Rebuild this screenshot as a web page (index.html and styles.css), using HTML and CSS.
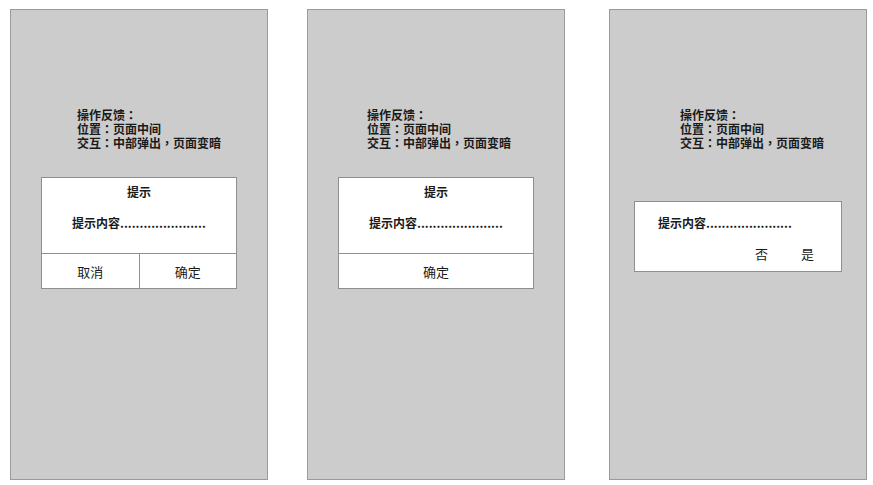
FILE: index.html
```html
<!DOCTYPE html>
<html lang="zh">
<head>
    <meta charset="UTF-8">
    <title>操作反馈 - 提示框</title>
    <link rel="stylesheet" href="styles.css">
</head>
<body>
    <div class="screens">
        <!-- 两个按钮 -->
        <div class="phone phone-a">
            <div class="note" lang="zh-TW">
                <div>操作反馈：</div>
                <div>位置：页面中间</div>
                <div>交互：中部弹出，页面变暗</div>
            </div>
            <div class="dialog">
                <div class="dialog-title">提示</div>
                <div class="dialog-text">提示内容......................</div>
                <div class="dialog-buttons">
                    <div class="btn">取消</div>
                    <div class="btn">确定</div>
                </div>
            </div>
        </div>

        <!-- 一个按钮 -->
        <div class="phone phone-b">
            <div class="note" lang="zh-TW">
                <div>操作反馈：</div>
                <div>位置：页面中间</div>
                <div>交互：中部弹出，页面变暗</div>
            </div>
            <div class="dialog">
                <div class="dialog-title">提示</div>
                <div class="dialog-text">提示内容......................</div>
                <div class="dialog-buttons">
                    <div class="btn">确定</div>
                </div>
            </div>
        </div>

        <!-- 无标题，文字按钮 -->
        <div class="phone phone-c">
            <div class="note" lang="zh-TW">
                <div>操作反馈：</div>
                <div>位置：页面中间</div>
                <div>交互：中部弹出，页面变暗</div>
            </div>
            <div class="dialog dialog-small">
                <div class="dialog-text">提示内容......................</div>
                <div class="dialog-links">
                    <span>否</span>
                    <span>是</span>
                </div>
            </div>
        </div>
    </div>
</body>
</html>
```

FILE: styles.css
```css
body {
    margin: 0;
    background: #fff;
    font-family: "Noto Sans CJK SC", sans-serif;
    color: #1a1a1a;
}

.screens {
    display: flex;
    padding: 9px 0 0 10px;
}

.phone {
    box-sizing: border-box;
    width: 258px;
    height: 471px;
    background: #cccccc;
    border: 1px solid #9a9a9a;
    padding-top: 98px;
}

.phone-a {
    margin-right: 39px;
}

.phone-b {
    margin-right: 44px;
}

/* 说明文字，标点居中 */
.note {
    font-family: "Noto Sans CJK TC", "Noto Sans CJK SC", sans-serif;
    font-size: 12px;
    font-weight: bold;
    line-height: 14px;
}

.phone-a .note {
    padding-left: 66px;
}

.phone-b .note {
    padding-left: 59px;
}

.phone-c .note {
    padding-left: 70px;
}

.dialog {
    box-sizing: border-box;
    width: 196px;
    margin: 27px 0 0 30px;
    background: #fff;
    border: 1px solid #8f8f8f;
}

.dialog-title {
    text-align: center;
    font-size: 12px;
    font-weight: bold;
    line-height: 14px;
    padding-top: 7px;
}

.dialog-text {
    font-size: 12px;
    font-weight: bold;
    line-height: 14px;
    padding: 17px 0 0 30px;
    height: 37px;
}

.dialog-buttons {
    display: flex;
    border-top: 1px solid #8f8f8f;
    height: 34px;
}

.btn {
    flex: 1;
    display: flex;
    align-items: center;
    justify-content: center;
    font-size: 13px;
}

.btn + .btn {
    border-left: 1px solid #8f8f8f;
}

.dialog-small {
    width: 208px;
    height: 71px;
    margin: 51px 0 0 24px;
}

.dialog-small .dialog-text {
    padding: 14px 0 0 23px;
    height: auto;
}

.dialog-links {
    display: flex;
    justify-content: flex-end;
    gap: 33px;
    padding: 17px 27px 0 0;
    font-size: 13px;
    line-height: 14px;
}
```
